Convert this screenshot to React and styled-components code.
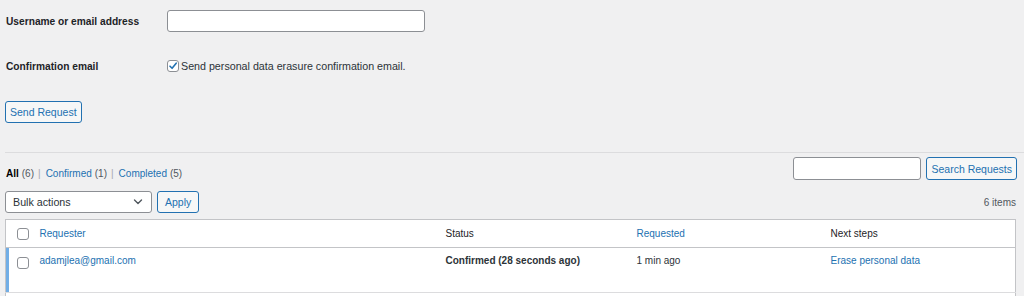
import React from "react";
import styled, { createGlobalStyle } from "styled-components";

const Global = createGlobalStyle`
  html, body { margin: 0; padding: 0; }
  body {
    background: #f0f0f1;
    font-family: "Liberation Sans", Arial, sans-serif;
    font-size: 10.7px;
    color: #1d2327;
    overflow: hidden;
  }
`;

const Page = styled.div`
  padding: 0 0 0 5px;
  width: 1019px;
  height: 296px;
  overflow: hidden;
`;

const FormGrid = styled.div`
  display: grid;
  grid-template-columns: 162px 1fr;
  padding-top: 10px;
`;

const Label = styled.div`
  font-weight: bold;
  font-size: 10.2px;
  padding-left: 1px;
  display: flex;
  align-items: center;
  height: ${(p) => p.$h}px;
  margin-bottom: ${(p) => p.$mb}px;
`;

const Field = styled.div`
  display: flex;
  align-items: center;
  height: ${(p) => p.$h}px;
  margin-bottom: ${(p) => p.$mb}px;
`;

const TextInput = styled.input`
  box-sizing: border-box;
  width: ${(p) => p.$w}px;
  height: ${(p) => p.$hgt || 22}px;
  border: 1px solid #8c8f94;
  border-radius: 3px;
  background: #fff;
  margin: 0;
  padding: 0 6px;
`;

const CheckLabel = styled.label`
  display: flex;
  align-items: center;
  font-size: 10.7px;
  color: #2c3338;
`;

const Check = styled.span`
  box-sizing: border-box;
  width: 12px;
  height: 12px;
  border: 1px solid #8c8f94;
  border-radius: 3px;
  background: #fff;
  display: inline-flex;
  align-items: center;
  justify-content: center;
  flex: none;
  margin-right: ${(p) => p.$mr || 0}px;
`;

const Button = styled.button`
  box-sizing: border-box;
  height: ${(p) => p.$h || 22}px;
  padding: 0 ${(p) => p.$px || 7}px;
  border: 1px solid #2271b1;
  border-radius: 3px;
  background: #f6f7f7;
  color: #2271b1;
  font-family: inherit;
  font-size: 10.5px;
  white-space: nowrap;
  margin: 0;
  cursor: pointer;
`;

const ButtonRow = styled.div`
  margin-top: 28px;
  display: flex;
`;

const Rule = styled.hr`
  border: 0;
  border-top: 1px solid #dcdcde;
  margin: 29px 0 0 0;
  height: 0;
`;

const TopNav = styled.div`
  display: flex;
  align-items: center;
  justify-content: space-between;
  margin-top: 4px;
  padding-right: 7px;
`;

const Subsub = styled.ul`
  list-style: none;
  margin: 9px 0 0 0;
  padding: 0 0 0 1px;
  display: flex;
  align-items: center;
  font-size: 10px;
  color: #50575e;
`;

const SubItem = styled.li`
  display: flex;
  align-items: center;
`;

const SubLink = styled.a`
  color: ${(p) => (p.$current ? "#000" : "#2271b1")};
  font-weight: ${(p) => (p.$current ? "bold" : "normal")};
  text-decoration: none;
  margin-right: 3px;
`;

const Sep = styled.span`
  color: #a7aaad;
  margin: 0 5px 0 4px;
`;

const SearchBox = styled.div`
  display: flex;
  align-items: center;
  gap: 5px;
`;

const TableNav = styled.div`
  display: flex;
  align-items: center;
  justify-content: space-between;
  margin-top: 11px;
  padding-right: 8px;
`;

const Actions = styled.div`
  display: flex;
  align-items: center;
  gap: 5px;
`;

const Select = styled.div`
  box-sizing: border-box;
  width: 147px;
  height: 22px;
  border: 1px solid #8c8f94;
  border-radius: 3px;
  background: #fff;
  display: flex;
  align-items: center;
  justify-content: space-between;
  padding: 0 8px 0 7px;
  font-size: 10.7px;
  color: #2c3338;
`;

const Count = styled.span`
  font-size: 10px;
  color: #50575e;
`;

const Table = styled.table`
  margin-top: 6px;
  width: 1011px;
  border-collapse: collapse;
  table-layout: fixed;
  background: #fff;
  border: 1px solid #c3c4c7;
  font-size: 10px;
`;

const HeadCell = styled.th`
  text-align: left;
  font-weight: normal;
  height: 27px;
  padding: 0 0 0 ${(p) => p.$pl ?? 6}px;
  border-bottom: 1px solid #c3c4c7;
  color: ${(p) => (p.$link ? "#2271b1" : "#1d2327")};
  vertical-align: middle;
`;

const Row = styled.tr`
  border-top: ${(p) => (p.$sep ? "1px solid #dcdcde" : "none")};
`;

const Cell = styled.td`
  vertical-align: top;
  height: 45px;
  padding: 7px 0 0 ${(p) => p.$pl ?? 6}px;
  box-sizing: border-box;
  color: ${(p) => (p.$link ? "#2271b1" : "#2c3338")};
  font-weight: ${(p) => (p.$bold ? "bold" : "normal")};
  box-shadow: ${(p) => (p.$accent ? "inset 3px 0 0 #72aee6" : "none")};
`;

const CbWrap = styled.div`
  padding-left: 11px;
  padding-top: ${(p) => p.$pt || 0}px;
  display: flex;
`;

const TickIcon = () => (
  <svg width="10" height="10" viewBox="0 0 10 10">
    <path d="M2 5.2 L4.1 7.3 L8.2 2.2" fill="none" stroke="#2271b1" strokeWidth="1.6" strokeLinecap="round" strokeLinejoin="round" />
  </svg>
);

const Chevron = () => (
  <svg width="10" height="6" viewBox="0 0 10 6">
    <path d="M1.5 1 L5 4.5 L8.5 1" fill="none" stroke="#50575e" strokeWidth="1.4" strokeLinecap="round" strokeLinejoin="round" />
  </svg>
);

export default function App() {
  return (
    <>
      <Global />
      <Page>
        <FormGrid>
          <Label $h={22} $mb={27}>Username or email address</Label>
          <Field $h={22} $mb={27}>
            <TextInput $w={258} />
          </Field>
          <Label $h={14} $mb={0}>Confirmation email</Label>
          <Field $h={14} $mb={0}>
            <CheckLabel>
              <Check $mr={2}><TickIcon /></Check>
              Send personal data erasure confirmation email.
            </CheckLabel>
          </Field>
        </FormGrid>
        <ButtonRow>
          <Button $px={4}>Send Request</Button>
        </ButtonRow>
        <Rule />
        <TopNav>
          <Subsub>
            <SubItem><SubLink $current>All</SubLink>(6)</SubItem>
            <Sep>|</Sep>
            <SubItem><SubLink>Confirmed</SubLink>(1)</SubItem>
            <Sep>|</Sep>
            <SubItem><SubLink>Completed</SubLink>(5)</SubItem>
          </Subsub>
          <SearchBox>
            <TextInput $w={128} $hgt={23} />
            <Button $h={23} $px={4}>Search Requests</Button>
          </SearchBox>
        </TopNav>
        <TableNav>
          <Actions>
            <Select>
              Bulk actions
              <Chevron />
            </Select>
            <Button $px={7}>Apply</Button>
          </Actions>
          <Count>6 items</Count>
        </TableNav>
        <Table>
          <colgroup>
            <col style={{ width: 28 }} />
            <col style={{ width: 406 }} />
            <col style={{ width: 191 }} />
            <col style={{ width: 194 }} />
            <col />
          </colgroup>
          <thead>
            <tr>
              <HeadCell $pl={0}><CbWrap><Check /></CbWrap></HeadCell>
              <HeadCell $link>Requester</HeadCell>
              <HeadCell>Status</HeadCell>
              <HeadCell $link>Requested</HeadCell>
              <HeadCell>Next steps</HeadCell>
            </tr>
          </thead>
          <tbody>
            <Row>
              <Cell $pl={0} $accent><CbWrap $pt={2}><Check /></CbWrap></Cell>
              <Cell $link>adamjlea@gmail.com</Cell>
              <Cell $bold>Confirmed (28 seconds ago)</Cell>
              <Cell>1 min ago</Cell>
              <Cell $link>Erase personal data</Cell>
            </Row>
            <Row $sep>
              <Cell $pl={0} />
              <Cell />
              <Cell />
              <Cell />
              <Cell />
            </Row>
          </tbody>
        </Table>
      </Page>
    </>
  );
}
